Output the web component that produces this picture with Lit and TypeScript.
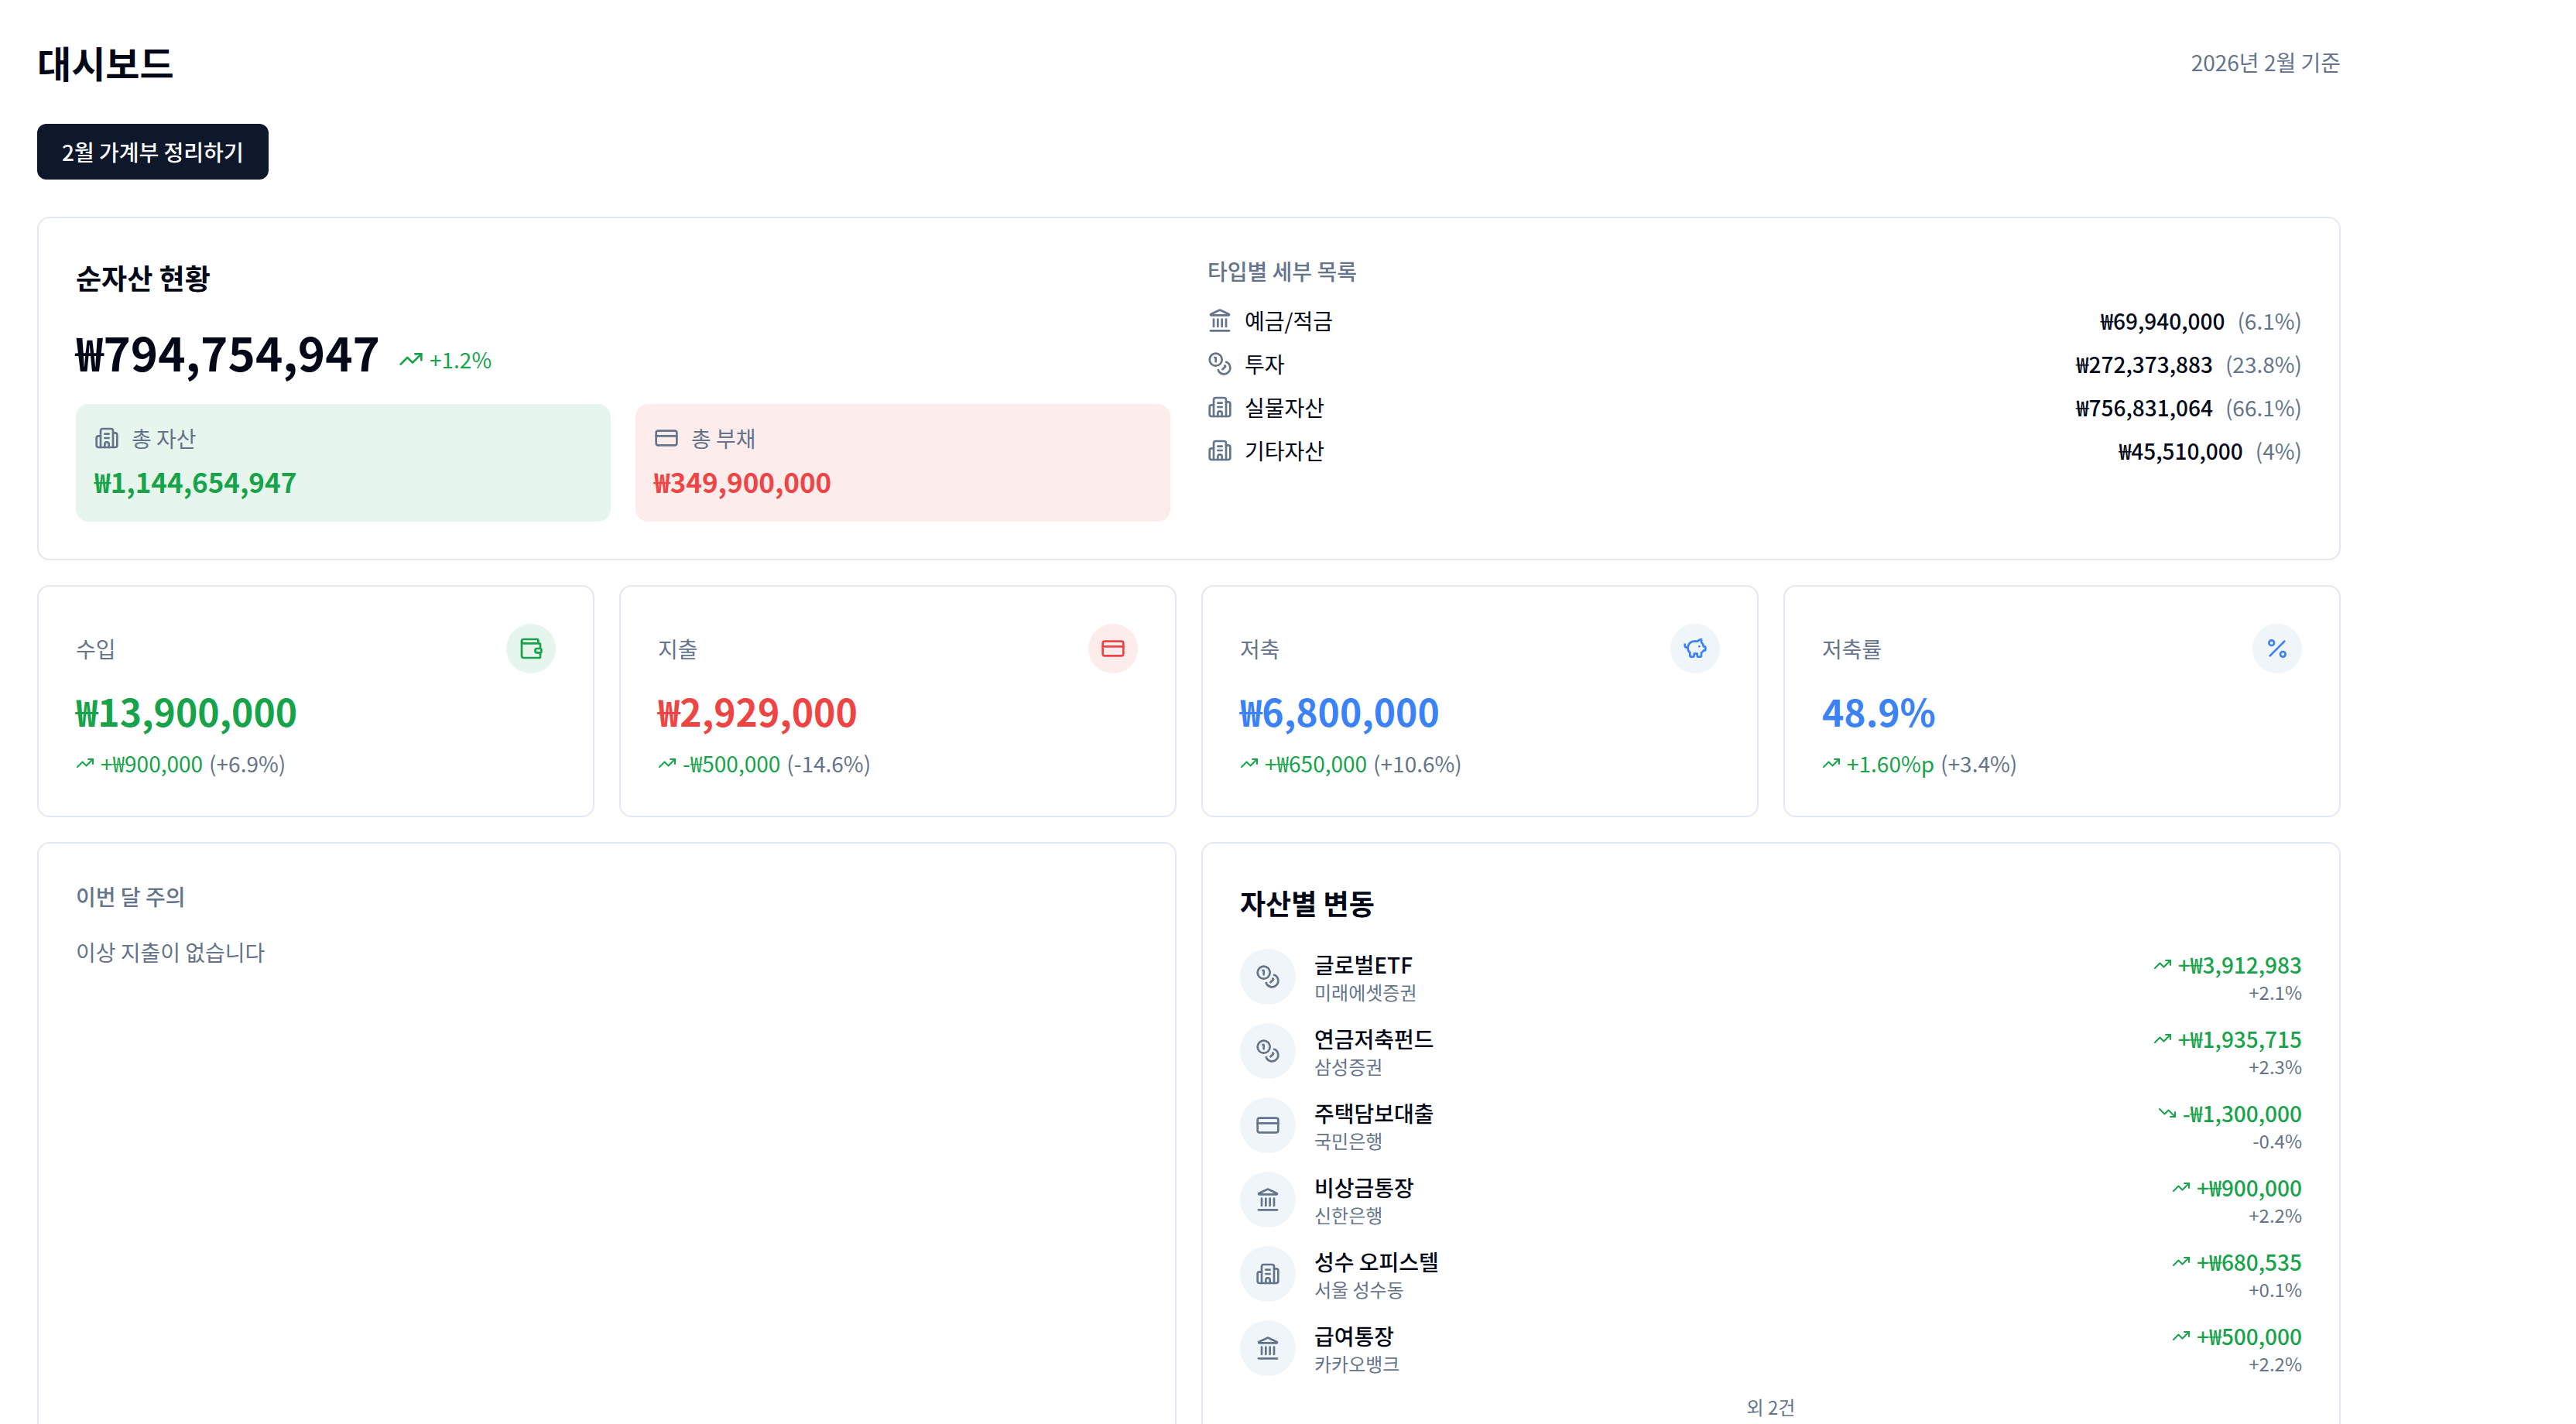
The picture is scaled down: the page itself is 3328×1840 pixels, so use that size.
import { LitElement, html, css, svg, type TemplateResult } from "lit";
import { customElement, property } from "lit/decorators.js";

type Tone = "green" | "red" | "blue" | "muted";

const ICONS: Record<string, TemplateResult> = {
  building: svg`<path d="M10 12h4"/><path d="M10 8h4"/><path d="M14 21v-3a2 2 0 0 0-4 0v3"/><path d="M6 10H4a2 2 0 0 0-2 2v7a2 2 0 0 0 2 2h16a2 2 0 0 0 2-2V9a2 2 0 0 0-2-2h-2"/><path d="M6 21V5a2 2 0 0 1 2-2h8a2 2 0 0 1 2 2v16"/>`,
  card: svg`<rect width="20" height="14" x="2" y="5" rx="2"/><path d="M2 10h20"/>`,
  landmark: svg`<path d="M10 18v-7"/><path d="M11.12 2.198a2 2 0 0 1 1.76.006l7.866 3.847c.476.233.31.949-.22.949H3.474c-.53 0-.695-.716-.22-.949z"/><path d="M14 18v-7"/><path d="M18 18v-7"/><path d="M3 22h18"/><path d="M6 18v-7"/>`,
  coins: svg`<circle cx="8" cy="8" r="6"/><path d="M18.09 10.37A6 6 0 1 1 10.34 18"/><path d="M7 6h1v4"/><path d="m16.71 13.88.7.71-2.82 2.82"/>`,
  wallet: svg`<path d="M19 7V4a1 1 0 0 0-1-1H5a2 2 0 0 0 0 4h15a1 1 0 0 1 1 1v4h-3a2 2 0 0 0 0 4h3a1 1 0 0 0 1-1v-2a1 1 0 0 0-1-1"/><path d="M3 5v14a2 2 0 0 0 2 2h15a1 1 0 0 0 1-1v-4"/>`,
  piggy: svg`<path d="M11 17h3v2a1 1 0 0 0 1 1h2a1 1 0 0 0 1-1v-3a3.16 3.16 0 0 0 2-2h1a1 1 0 0 0 1-1v-2a1 1 0 0 0-1-1h-1a5 5 0 0 0-2-4V3a4 4 0 0 0-3.2 1.6l-.3.4H11a6 6 0 0 0-6 6v1a5 5 0 0 0 2 4v3a1 1 0 0 0 1 1h2a1 1 0 0 0 1-1z"/><path d="M16 10h.01"/><path d="M2 8v1a2 2 0 0 0 2 2h1"/>`,
  percent: svg`<path d="M19 5 5 19"/><circle cx="6.5" cy="6.5" r="2.5"/><circle cx="17.5" cy="17.5" r="2.5"/>`,
  up: svg`<path d="M16 7h6v6"/><path d="m22 7-8.5 8.5-5-5L2 17"/>`,
  down: svg`<path d="M16 17h6v-6"/><path d="m22 17-8.5-8.5-5 5L2 7"/>`,
};

const TYPES = [
  { icon: "landmark", name: "예금/적금", amount: "₩69,940,000", share: "(6.1%)" },
  { icon: "coins", name: "투자", amount: "₩272,373,883", share: "(23.8%)" },
  { icon: "building", name: "실물자산", amount: "₩756,831,064", share: "(66.1%)" },
  { icon: "building", name: "기타자산", amount: "₩45,510,000", share: "(4%)" },
];

const STATS: { label: string; icon: string; tone: Tone; value: string; delta: string; rate: string }[] = [
  { label: "수입", icon: "wallet", tone: "green", value: "₩13,900,000", delta: "+₩900,000", rate: "(+6.9%)" },
  { label: "지출", icon: "card", tone: "red", value: "₩2,929,000", delta: "-₩500,000", rate: "(-14.6%)" },
  { label: "저축", icon: "piggy", tone: "blue", value: "₩6,800,000", delta: "+₩650,000", rate: "(+10.6%)" },
  { label: "저축률", icon: "percent", tone: "blue", value: "48.9%", delta: "+1.60%p", rate: "(+3.4%)" },
];

const CHANGES = [
  { icon: "coins", name: "글로벌ETF", place: "미래에셋증권", trend: "up", amount: "+₩3,912,983", rate: "+2.1%" },
  { icon: "coins", name: "연금저축펀드", place: "삼성증권", trend: "up", amount: "+₩1,935,715", rate: "+2.3%" },
  { icon: "card", name: "주택담보대출", place: "국민은행", trend: "down", amount: "-₩1,300,000", rate: "-0.4%" },
  { icon: "landmark", name: "비상금통장", place: "신한은행", trend: "up", amount: "+₩900,000", rate: "+2.2%" },
  { icon: "building", name: "성수 오피스텔", place: "서울 성수동", trend: "up", amount: "+₩680,535", rate: "+0.1%" },
  { icon: "landmark", name: "급여통장", place: "카카오뱅크", trend: "up", amount: "+₩500,000", rate: "+2.2%" },
];

@customElement("line-icon")
export class LineIcon extends LitElement {
  @property() name = "";
  @property({ type: Boolean }) small = false;

  static styles = css`
    :host { display: block; flex: none; }
    svg { display: block; width: 32px; height: 32px; }
    svg.small { width: 24px; height: 24px; }
  `;

  render() {
    return html`<svg class=${this.small ? "small" : ""} viewBox="0 0 24 24" fill="none" stroke="currentColor"
      stroke-width="2" stroke-linecap="round" stroke-linejoin="round" aria-hidden="true">${ICONS[this.name]}</svg>`;
  }
}

@customElement("app-root")
export class AppRoot extends LitElement {
  static styles = css`
    :host {
      display: block;
      height: 100vh;
      overflow: hidden auto;
      scrollbar-width: none;
      background: #ffffff;
      color: #020817;
      font-family: "Noto Sans CJK KR", "Noto Sans", sans-serif;
      font-size: 28px;
      line-height: 40px;
      --muted: #64748b;
      --green: #16a34a;
      --red: #ef4444;
      --blue: #3b82f6;
    }
    * { box-sizing: border-box; }
    h1, h2, h3, p, ul { margin: 0; padding: 0; font: inherit; }
    ul { list-style: none; }
    main {
      max-width: 3072px;
      padding: 48px;
      display: flex;
      flex-direction: column;
      gap: 48px;
    }
    .top { display: flex; justify-content: space-between; align-items: center; }
    h1 { font-size: 48px; line-height: 64px; font-weight: 700; }
    .muted { color: var(--muted); }
    .medium { font-weight: 500; }
    .green { color: var(--green); }
    .red { color: var(--red); }
    .blue { color: var(--blue); }
    button {
      align-self: flex-start;
      height: 72px;
      padding: 0 32px;
      border: 0;
      border-radius: 12px;
      background: #0f172a;
      color: #f8fafc;
      font: inherit;
      font-weight: 500;
      cursor: pointer;
    }
    .sections { display: flex; flex-direction: column; gap: 32px; }
    .card { border: 2px solid #e2e8f0; border-radius: 16px; padding: 48px; background: #ffffff; }
    .title { font-size: 36px; line-height: 56px; font-weight: 600; }
    .worth { display: grid; grid-template-columns: 1fr 1fr; gap: 48px; }
    .stack { display: flex; flex-direction: column; gap: 32px; }
    .net { display: flex; align-items: flex-end; gap: 24px; }
    .net-value { font-size: 60px; line-height: 72px; font-weight: 700; }
    .net .trend { padding-bottom: 6px; }
    .trend { display: flex; align-items: center; gap: 8px; }
    .pair { display: grid; grid-template-columns: 1fr 1fr; gap: 32px; }
    .tile { border-radius: 16px; padding: 24px; display: flex; flex-direction: column; gap: 8px; }
    .bg-green { background: #e7f6ec; }
    .bg-red { background: #fdecec; }
    .bg-blue, .bg-muted { background: #f0f5f9; }
    .line { display: flex; align-items: center; gap: 16px; }
    .total { font-size: 35px; line-height: 56px; font-weight: 600; }
    .types { display: flex; flex-direction: column; gap: 24px; }
    .types ul { display: flex; flex-direction: column; gap: 16px; }
    .between { display: flex; align-items: center; justify-content: space-between; }
    .stats { display: grid; grid-template-columns: repeat(4, 1fr); gap: 32px; }
    .stat { display: flex; flex-direction: column; gap: 16px; }
    .round { display: flex; align-items: center; justify-content: center; flex: none; border-radius: 50%; width: 64px; height: 64px; }
    .round.large { width: 72px; height: 72px; }
    .stat-value { font-size: 48px; line-height: 64px; font-weight: 700; }
    .halves { display: grid; grid-template-columns: 1fr 1fr; gap: 32px; }
    .changes { display: flex; flex-direction: column; gap: 24px; }
    .who { display: flex; align-items: center; gap: 24px; }
    .right { display: flex; flex-direction: column; align-items: flex-end; }
    .small { font-size: 24px; line-height: 32px; }
    .more { text-align: center; }
  `;

  render() {
    return html`
      <main>
        <header class="top">
          <h1>대시보드</h1>
          <p class="muted">2026년 2월 기준</p>
        </header>
        <button type="button">2월 가계부 정리하기</button>
        <div class="sections">
          ${this.renderWorth()}
          <section class="stats">
            ${STATS.map(
              (s) => html`
                <article class="card stat">
                  <div class="between">
                    <h3 class="muted">${s.label}</h3>
                    <span class="round bg-${s.tone} ${s.tone}"><line-icon name=${s.icon}></line-icon></span>
                  </div>
                  <p class="stat-value ${s.tone}">${s.value}</p>
                  <div class="trend">
                    <line-icon class="green" name="up" small></line-icon>
                    <span class="green">${s.delta}</span>
                    <span class="muted">${s.rate}</span>
                  </div>
                </article>
              `
            )}
          </section>
          <div class="halves">
            <section class="card stack">
              <h2 class="muted medium">이번 달 주의</h2>
              <p class="muted">이상 지출이 없습니다</p>
            </section>
            ${this.renderChanges()}
          </div>
        </div>
      </main>
    `;
  }

  private renderWorth() {
    return html`
      <section class="card worth">
        <div class="stack">
          <h2 class="title">순자산 현황</h2>
          <div class="net">
            <span class="net-value">₩794,754,947</span>
            <span class="trend green"><line-icon name="up"></line-icon>+1.2%</span>
          </div>
          <div class="pair">
            <div class="tile bg-green">
              <div class="line muted"><line-icon name="building"></line-icon>총 자산</div>
              <div class="total green">₩1,144,654,947</div>
            </div>
            <div class="tile bg-red">
              <div class="line muted"><line-icon name="card"></line-icon>총 부채</div>
              <div class="total red">₩349,900,000</div>
            </div>
          </div>
        </div>
        <div class="types">
          <h3 class="muted medium">타입별 세부 목록</h3>
          <ul>
            ${TYPES.map(
              (t) => html`
                <li class="between">
                  <span class="line"><line-icon class="muted" name=${t.icon}></line-icon>${t.name}</span>
                  <span class="line"><span class="medium">${t.amount}</span><span class="muted">${t.share}</span></span>
                </li>
              `
            )}
          </ul>
        </div>
      </section>
    `;
  }

  private renderChanges() {
    return html`
      <section class="card stack">
        <h2 class="title">자산별 변동</h2>
        <div class="changes">
          <ul class="changes">
            ${CHANGES.map(
              (c) => html`
                <li class="between">
                  <div class="who">
                    <span class="round large bg-muted muted"><line-icon name=${c.icon}></line-icon></span>
                    <div>
                      <p class="medium">${c.name}</p>
                      <p class="small muted">${c.place}</p>
                    </div>
                  </div>
                  <div class="right">
                    <span class="trend green medium"><line-icon name=${c.trend} small></line-icon>${c.amount}</span>
                    <span class="small muted">${c.rate}</span>
                  </div>
                </li>
              `
            )}
          </ul>
          <p class="small muted more">외 2건</p>
        </div>
      </section>
    `;
  }
}
